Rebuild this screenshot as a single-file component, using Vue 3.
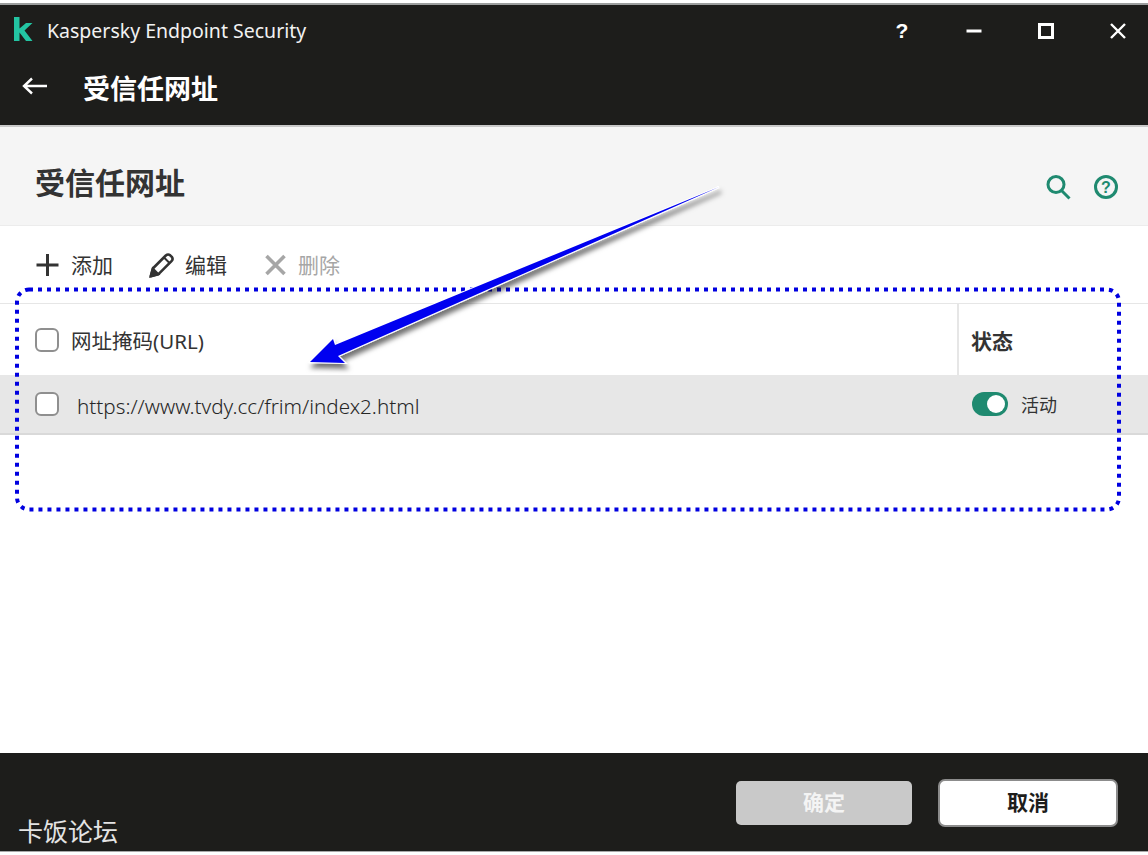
<template>
  <div class="window">
    <div class="top-strip"></div>
    <header class="titlebar">
      <div class="title-row">
        <svg class="logo" width="19" height="24" viewBox="0 0 19 24">
          <path d="M0 0h5.500v11.500L12 6h6.500l-8 7.500 8 10.500H12L5.500 15.500V24H0z" fill="#23c4a2" />
        </svg>
        <span class="app-name">Kaspersky Endpoint Security</span>
        <div class="win-btns">
          <span class="win-q">?</span>
          <svg width="16" height="16" viewBox="0 0 16 16"><path d="M0.500 8h15" stroke="#fff" stroke-width="3" /></svg>
          <svg width="16" height="16" viewBox="0 0 16 16"><rect x="1.500" y="1.500" width="13" height="13" fill="none" stroke="#fff" stroke-width="3" /></svg>
          <svg width="16" height="16" viewBox="0 0 16 16"><path d="M1 1l14 14M15 1L1 15" stroke="#fff" stroke-width="2.400" /></svg>
        </div>
      </div>
      <div class="nav-row">
        <svg class="back" width="26" height="20" viewBox="0 0 26 20" fill="none" stroke="#fff" stroke-width="2.400">
          <path d="M25 10H2M10 2.500 2 10l8 7.500" />
        </svg>
        <span class="nav-title">受信任网址</span>
      </div>
    </header>

    <section class="page-head">
      <h1>受信任网址</h1>
      <div class="head-icons">
        <svg width="26" height="26" viewBox="0 0 26 26" fill="none" stroke="#1f8a70" stroke-width="3">
          <circle cx="11" cy="10.500" r="8" />
          <path d="M16.500 16.500 24.500 24.500" />
        </svg>
        <svg width="26" height="26" viewBox="0 0 26 26">
          <circle cx="13" cy="13" r="10.500" fill="none" stroke="#1f8a70" stroke-width="3" />
          <text x="13" y="18.500" class="help-mark">?</text>
        </svg>
      </div>
    </section>

    <div class="toolbar">
      <button class="tool">
        <svg width="26" height="26" viewBox="0 0 26 26"><path d="M12.500 2v22M1.500 13h22" stroke="#333" stroke-width="3" /></svg>
        <span class="tool-label">添加</span>
      </button>
      <button class="tool">
        <svg width="26" height="26" viewBox="0 0 26 26">
          <path d="M1.800 24.200 3.800 16.500 16.800 3.500Q19 1.600 21.200 3.300L22.800 4.900Q24.500 7.100 22.500 9.200L9.500 22.200z" fill="#fff" stroke="#333" stroke-width="2.600" stroke-linejoin="round" />
          <path d="M1.500 24.500 3.800 16.500 9.500 22.200zM15 5.500l5.500 5.500" fill="#333" stroke="#333" stroke-width="2" />
        </svg>
        <span class="tool-label">编辑</span>
      </button>
      <button class="tool disabled">
        <svg width="25" height="26" viewBox="0 0 25 26"><path d="M3.500 4l18 18M21.500 4l-18 18" stroke="#a6a6a6" stroke-width="3.600" /></svg>
        <span class="tool-label">删除</span>
      </button>
    </div>

    <div class="table-head">
      <div class="col-url">
        <span class="check"></span>
        <span>网址掩码(URL)</span>
      </div>
      <div class="col-state">状态</div>
    </div>
    <div class="table-row">
      <div class="col-url">
        <span class="check"></span>
        <span class="url">https://www.tvdy.cc/frim/index2.html</span>
      </div>
      <div class="col-status">
        <span class="switch"><i></i></span>
        <span class="status-text">活动</span>
      </div>
    </div>

    <div class="spacer"></div>

    <footer class="footer">
      <button class="btn btn-ok">确定</button>
      <button class="btn btn-cancel">取消</button>
    </footer>
    <div class="bottom-strip"></div>

    <!-- annotations drawn over the screenshot -->
    <span class="watermark">卡饭论坛</span>
    <svg class="marks" width="1148" height="855" viewBox="0 0 1148 855">
      <defs>
        <filter id="arrow-shadow" x="-10%" y="-10%" width="120%" height="130%">
          <feDropShadow dx="2" dy="5" stdDeviation="2.500" flood-color="#000" flood-opacity="0.55" />
        </filter>
      </defs>
      <rect
        x="17"
        y="289.500"
        width="1102"
        height="220"
        rx="12"
        fill="none"
        stroke="#0000e0"
        stroke-width="4"
        stroke-dasharray="4 5"
      />
      <path
        class="arrow"
        d="M719 187 335 345 333 339 310 362 345 363 338 356z"
        fill="#0000f0"
        stroke="#fff"
        stroke-width="2"
        filter="url(#arrow-shadow)"
      />
    </svg>
  </div>
</template>

<script setup>
</script>

<style>
html,
body {
  margin: 0;
  background: #fff;
}
</style>

<style scoped>
.window {
  position: relative;
  width: 1148px;
  height: 855px;
  display: flex;
  flex-direction: column;
  overflow: hidden;
  background: #fff;
  color: #333;
  font-family: "Open Sans", "Noto Sans CJK SC", sans-serif;
}
.top-strip {
  height: 3px;
  flex: none;
  background: #fff;
  border-bottom: 2px solid #9c9e9e;
}
.titlebar {
  height: 120px;
  flex: none;
  background: #1d1d1b;
  border-bottom: 2px solid #c9c9c9;
  color: #fff;
}
.title-row {
  height: 52px;
  display: flex;
  align-items: center;
  padding-left: 14px;
}
.logo {
  margin: 0 14px 4px 0;
}
.app-name {
  margin-bottom: 2px;
  font-size: 19.500px;
  color: #f2f2f2;
  font-family: "Noto Sans", sans-serif;
}
.win-btns {
  margin-left: auto;
  display: flex;
  align-items: center;
  gap: 56px;
  padding-right: 22px;
}
.win-q {
  font-size: 21px;
  font-weight: 700;
  width: 16px;
  text-align: center;
  font-family: "Liberation Sans", sans-serif;
}
.nav-row {
  height: 60px;
  display: flex;
  align-items: center;
  gap: 35px;
  padding-left: 22px;
}
.back {
  margin-bottom: 3px;
}
.nav-title {
  font-size: 27px;
  font-weight: 700;
  font-family: "Noto Sans CJK SC", sans-serif;
}
.page-head {
  height: 98px;
  flex: none;
  background: #f5f5f5;
  border-bottom: 1px solid #ececec;
  display: flex;
  align-items: center;
  justify-content: space-between;
  padding: 0 29px 0 35px;
}
.page-head h1 {
  margin: 10px 0 0;
  font-size: 30px;
  font-weight: 700;
  color: #333;
  font-family: "Noto Sans CJK SC", sans-serif;
}
.head-icons {
  display: flex;
  gap: 22px;
  margin-top: 22px;
}
.help-mark {
  font-size: 16px;
  font-weight: 700;
  fill: #1f8a70;
  text-anchor: middle;
  font-family: "Liberation Sans", sans-serif;
}
.toolbar {
  height: 78px;
  flex: none;
  display: flex;
  align-items: center;
  gap: 36px;
  padding-left: 35px;
  border-bottom: 1px solid #e6e6e6;
  box-sizing: border-box;
}
.tool {
  display: flex;
  align-items: center;
  gap: 10px;
  padding: 0;
  border: 0;
  background: none;
  font-size: 21px;
  color: #333;
  font-family: "Noto Sans CJK SC", sans-serif;
}
.tool-label {
  margin-bottom: 1px;
}
.tool.disabled {
  color: #a6a6a6;
}
.table-head {
  height: 71px;
  flex: none;
  display: flex;
  align-items: stretch;
}
.col-url {
  flex: 1;
  display: flex;
  align-items: center;
  gap: 12px;
  padding-left: 35px;
  font-size: 20.500px;
  font-family: "Noto Sans", "Noto Sans CJK SC", sans-serif;
}
.col-state {
  width: 191px;
  flex: none;
  padding: 21px 0 0 12px;
  box-sizing: border-box;
  border-left: 2px solid #e6e6e6;
  font-size: 21px;
  font-weight: 700;
  font-family: "Noto Sans CJK SC", sans-serif;
  line-height: 30px;
}
.check {
  width: 24px;
  height: 24px;
  flex: none;
  box-sizing: border-box;
  border: 2px solid #8f8f8f;
  border-radius: 6px;
  background: #fff;
}
.table-row {
  height: 60px;
  flex: none;
  display: flex;
  box-sizing: border-box;
  background: #e7e7e7;
  border-bottom: 2px solid #d9d9d9;
}
.url {
  margin: 4px 0 0 6px;
  font-size: 20.650px;
  font-weight: 300;
  color: #262626;
}
.col-status {
  width: 190px;
  flex: none;
  display: flex;
  align-items: center;
  gap: 13px;
  padding-left: 14px;
  box-sizing: border-box;
}
.switch {
  width: 36px;
  height: 24px;
  flex: none;
  display: flex;
  align-items: center;
  justify-content: flex-end;
  padding-right: 3px;
  box-sizing: border-box;
  border-radius: 12px;
  background: #1f8a70;
}
.switch i {
  width: 18px;
  height: 18px;
  border-radius: 50%;
  background: #fff;
}
.status-text {
  font-size: 18px;
  font-family: "Noto Sans CJK SC", sans-serif;
}
.spacer {
  flex: 1;
}
.footer {
  height: 98px;
  flex: none;
  display: flex;
  align-items: center;
  justify-content: flex-end;
  gap: 26px;
  padding: 2px 30px 0 0;
  box-sizing: border-box;
  background: #1d1d1b;
}
.btn {
  width: 176px;
  height: 44px;
  padding: 0 0 4px;
  border: 0;
  border-radius: 5px;
  font-size: 21px;
  font-weight: 700;
  font-family: "Noto Sans CJK SC", sans-serif;
}
.btn-ok {
  background: #c9c9c9;
  color: #f4f4f4;
}
.btn-cancel {
  width: 180px;
  height: 48px;
  background: #fff;
  color: #1d1d1b;
  border: 2px solid #8c8c8c;
  border-radius: 7px;
}
.bottom-strip {
  height: 4px;
  flex: none;
  background: #fff;
  border-top: 1px solid #a8a8a8;
  box-sizing: border-box;
}
.watermark {
  position: absolute;
  left: 18px;
  top: 812px;
  font-size: 25px;
  line-height: 36px;
  color: #e4e4e4;
  font-family: "Noto Sans CJK SC", sans-serif;
}
.marks {
  position: absolute;
  left: 0;
  top: 0;
  pointer-events: none;
}
.arrow {
  paint-order: stroke;
}
</style>
